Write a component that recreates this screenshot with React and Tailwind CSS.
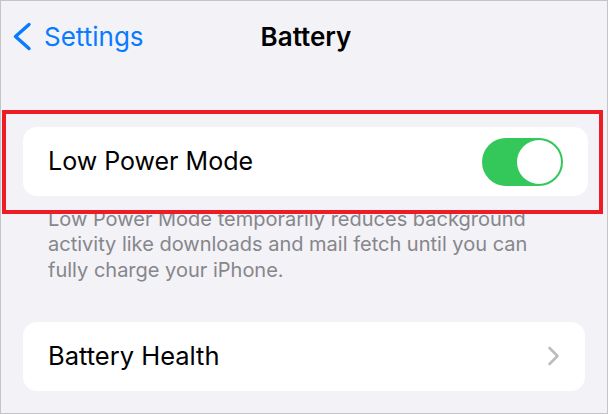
function Toggle() {
    return (
        <div className="relative h-[48px] w-[81px] shrink-0 rounded-full bg-[#34c759]">
            <div className="absolute right-[2px] top-[2px] h-[44px] w-[44px] rounded-full bg-white" />
        </div>
    );
}

export default function App() {
    return (
        <div className="h-[414px] w-[608px] overflow-hidden border border-[#c4c4c4] bg-[#f2f2f7] font-['Inter','Liberation_Sans',sans-serif] antialiased">
            {/* Nav bar */}
            <div className="grid h-[71px] grid-cols-[1fr_auto_1fr] items-center pl-[11px] pr-[7px]">
                <div className="flex items-center gap-[12px] text-[#0a7aff]">
                    <svg width="20" height="29" viewBox="0 0 20 29" fill="none">
                        <path
                            d="M17 2.5 L3.5 14.5 L17 26.5"
                            stroke="currentColor"
                            strokeWidth="3.4"
                            strokeLinecap="round"
                            strokeLinejoin="round"
                        />
                    </svg>
                    <span className="text-[26px] leading-none">Settings</span>
                </div>
                <div className="text-[26px] font-semibold leading-none text-black">Battery</div>
                <div />
            </div>

            {/* Low Power Mode (highlighted) */}
            <div className="relative z-10 ml-[1px] mr-[4px] mt-[38px] border-4 border-[#ee1c25] pb-[14px] pl-[17px] pr-[11px] pt-[13px]">
                <div className="flex h-[69px] items-center justify-between rounded-[14px] bg-white pl-[25px] pr-[25px]">
                    <span className="text-[25px] text-black">Low Power Mode</span>
                    <Toggle />
                </div>
            </div>

            <p className="mt-[-7px] pl-[47px] pr-[40px] text-[20px] leading-[25.3px] text-[#86868b]">
                Low Power Mode temporarily reduces background activity like downloads and mail fetch until you can
                fully charge your iPhone.
            </p>

            {/* Battery Health */}
            <div className="mx-[22px] mt-[39px] flex h-[69px] items-center justify-between rounded-[14px] bg-white pl-[25px] pr-[25px]">
                <span className="text-[25.5px] text-black">Battery Health</span>
                <svg width="13" height="20" viewBox="0 0 13 20" fill="none" className="text-[#bdbdc1]">
                    <path
                        d="M2.5 2 L10.5 10 L2.5 18"
                        stroke="currentColor"
                        strokeWidth="2.6"
                        strokeLinecap="round"
                        strokeLinejoin="round"
                    />
                </svg>
            </div>
        </div>
    );
}
